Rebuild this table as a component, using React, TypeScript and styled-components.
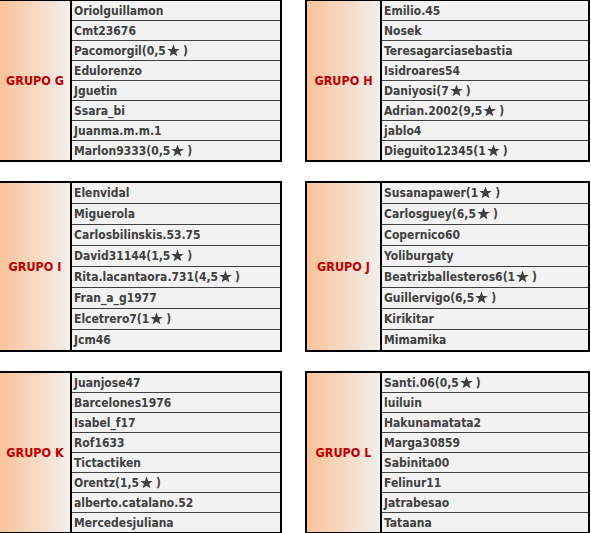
import { FC } from 'react';
import styled, { createGlobalStyle } from 'styled-components';

type Group = { name: string; rowHeight: number; players: string[] };

const groups: Group[] = [
  {
    name: 'GRUPO G',
    rowHeight: 20,
    players: ['Oriolguillamon', 'Cmt23676', 'Pacomorgil(0,5★)', 'Edulorenzo', 'Jguetin', 'Ssara_bi', 'Juanma.m.m.1', 'Marlon9333(0,5★)'],
  },
  {
    name: 'GRUPO H',
    rowHeight: 20,
    players: ['Emilio.45', 'Nosek', 'Teresagarciasebastia', 'Isidroares54', 'Daniyosi(7★)', 'Adrian.2002(9,5★)', 'jablo4', 'Dieguito12345(1★)'],
  },
  {
    name: 'GRUPO I',
    rowHeight: 21,
    players: ['Elenvidal', 'Miguerola', 'Carlosbilinskis.53.75', 'David31144(1,5★)', 'Rita.lacantaora.731(4,5★)', 'Fran_a_g1977', 'Elcetrero7(1★)', 'Jcm46'],
  },
  {
    name: 'GRUPO J',
    rowHeight: 21,
    players: ['Susanapawer(1★)', 'Carlosguey(6,5★)', 'Copernico60', 'Yoliburgaty', 'Beatrizballesteros6(1★)', 'Guillervigo(6,5★)', 'Kirikitar', 'Mimamika'],
  },
  {
    name: 'GRUPO K',
    rowHeight: 20,
    players: ['Juanjose47', 'Barcelones1976', 'Isabel_f17', 'Rof1633', 'Tictactiken', 'Orentz(1,5★)', 'alberto.catalano.52', 'Mercedesjuliana'],
  },
  {
    name: 'GRUPO L',
    rowHeight: 20,
    players: ['Santi.06(0,5★)', 'luiluin', 'Hakunamatata2', 'Marga30859', 'Sabinita00', 'Felinur11', 'Jatrabesao', 'Tataana'],
  },
];

// fat five point star, like the one in the sheet
const StarIcon: FC = () => (
  <StarSvg viewBox="0 0 24 24" aria-label="★">
    <polygon points="12,1 15,9 23.5,9.2 16.8,14.4 19.2,22.8 12,17.9 4.8,22.8 7.2,14.4 0.5,9.2 9,9" />
  </StarSvg>
);

const renderPlayer = (p: string) => {
  const star = p.indexOf('★');
  if (star < 0) return p;
  return (
    <>
      {p.slice(0, star)}
      <StarIcon />
      {p.slice(star + 1)}
    </>
  );
};

const App: FC = () => {
  return (
    <>
      <GlobalStyle />
      <Page>
        {groups.map((g, i) => (
          <GroupTable key={g.name}>
            <Label $wide={i % 2 === 1}>{g.name}</Label>
            <Players>
              {g.players.map((p, j) => (
                <Player key={j} $h={g.rowHeight} $last={j === g.players.length - 1}>
                  {renderPlayer(p)}
                </Player>
              ))}
            </Players>
          </GroupTable>
        ))}
      </Page>
    </>
  );
};

export default App;

const GlobalStyle = createGlobalStyle`
  body {
    margin: 0;
    background: #ffffff;
    font-family: "DejaVu Sans Condensed", "DejaVu Sans", sans-serif;
  }
`;

const Page = styled.div`
  display: grid;
  grid-template-columns: 284px 285px;
  column-gap: 23px;
  row-gap: 19px;
  margin-left: -2px;
  margin-top: -1px;
  align-items: start;
`;

const GroupTable = styled.div`
  display: flex;
  border: 2px solid #000;
  background: #f2f2f2;
`;

const Label = styled.div<{ $wide: boolean }>`
  display: flex;
  align-items: center;
  justify-content: center;
  width: ${p => (p.$wide ? 73 : 70)}px;
  flex-shrink: 0;
  border-right: 2px solid #000;
  background: linear-gradient(to right, #f9c39a, #f2efec);
  color: #c00000;
  font-weight: bold;
  font-size: 12.5px;
  padding-bottom: 1px;
`;

const Players = styled.div`
  display: flex;
  flex-direction: column;
  flex: 1;
  min-width: 0;
`;

const Player = styled.div<{ $h: number; $last: boolean }>`
  box-sizing: border-box;
  height: ${p => (p.$last ? p.$h - 1 : p.$h)}px;
  line-height: ${p => p.$h}px;
  border-bottom: ${p => (p.$last ? 'none' : '1px solid #404040')};
  padding-left: 2px;
  color: #404040;
  font-weight: bold;
  font-size: 12px;
  white-space: nowrap;
  overflow: hidden;
`;

const StarSvg = styled.svg`
  width: 13px;
  height: 13px;
  fill: #404040;
  vertical-align: -2px;
  margin: 0 3px 0 1px;
`;
